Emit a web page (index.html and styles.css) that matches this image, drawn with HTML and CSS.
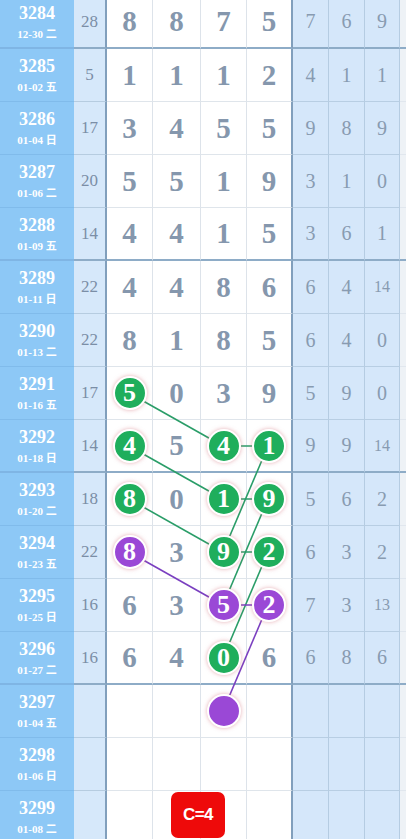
FILE: index.html
```html
<!DOCTYPE html>
<html lang="zh">
<head>
<meta charset="utf-8">
<title>走势图</title>
<link rel="stylesheet" href="styles.css">
</head>
<body>
<div class="board">
  <svg class="lines" width="406" height="839" viewBox="0 0 406 839">
    <g class="gl">
      <line x1="129" y1="393" x2="223" y2="446"/>
      <line x1="129" y1="446" x2="223" y2="499"/>
      <line x1="129" y1="499" x2="223" y2="552"/>
      <line x1="268" y1="446" x2="223" y2="552"/>
      <line x1="268" y1="499" x2="223" y2="605"/>
      <line x1="268" y1="552" x2="223" y2="658"/>
      <line x1="223" y1="446" x2="268" y2="446"/>
      <line x1="223" y1="499" x2="268" y2="499"/>
      <line x1="223" y1="552" x2="268" y2="552"/>
    </g>
    <g class="pl">
      <line x1="129" y1="552" x2="223" y2="605"/>
      <line x1="268" y1="605" x2="223" y2="711"/>
      <line x1="223" y1="605" x2="268" y2="605"/>
    </g>
  </svg>

  <div class="row g"><div class="id"><span class="no">3284</span><span class="dt">12-30 二</span></div><div class="sum">28</div><div class="m">8</div><div class="m">8</div><div class="m">7</div><div class="m">5</div><div class="r">7</div><div class="r">6</div><div class="r">9</div><div class="s"></div></div>
  <div class="row"><div class="id"><span class="no">3285</span><span class="dt">01-02 五</span></div><div class="sum">5</div><div class="m">1</div><div class="m">1</div><div class="m">1</div><div class="m">2</div><div class="r">4</div><div class="r">1</div><div class="r">1</div><div class="s"></div></div>
  <div class="row"><div class="id"><span class="no">3286</span><span class="dt">01-04 日</span></div><div class="sum">17</div><div class="m">3</div><div class="m">4</div><div class="m">5</div><div class="m">5</div><div class="r">9</div><div class="r">8</div><div class="r">9</div><div class="s"></div></div>
  <div class="row"><div class="id"><span class="no">3287</span><span class="dt">01-06 二</span></div><div class="sum">20</div><div class="m">5</div><div class="m">5</div><div class="m">1</div><div class="m">9</div><div class="r">3</div><div class="r">1</div><div class="r">0</div><div class="s"></div></div>
  <div class="row g"><div class="id"><span class="no">3288</span><span class="dt">01-09 五</span></div><div class="sum">14</div><div class="m">4</div><div class="m">4</div><div class="m">1</div><div class="m">5</div><div class="r">3</div><div class="r">6</div><div class="r">1</div><div class="s"></div></div>
  <div class="row"><div class="id"><span class="no">3289</span><span class="dt">01-11 日</span></div><div class="sum">22</div><div class="m">4</div><div class="m">4</div><div class="m">8</div><div class="m">6</div><div class="r">6</div><div class="r">4</div><div class="r two">14</div><div class="s"></div></div>
  <div class="row"><div class="id"><span class="no">3290</span><span class="dt">01-13 二</span></div><div class="sum">22</div><div class="m">8</div><div class="m">1</div><div class="m">8</div><div class="m">5</div><div class="r">6</div><div class="r">4</div><div class="r">0</div><div class="s"></div></div>
  <div class="row"><div class="id"><span class="no">3291</span><span class="dt">01-16 五</span></div><div class="sum">17</div><div class="m"><span class="ball green">5</span></div><div class="m">0</div><div class="m">3</div><div class="m">9</div><div class="r">5</div><div class="r">9</div><div class="r">0</div><div class="s"></div></div>
  <div class="row g"><div class="id"><span class="no">3292</span><span class="dt">01-18 日</span></div><div class="sum">14</div><div class="m"><span class="ball green">4</span></div><div class="m">5</div><div class="m"><span class="ball green">4</span></div><div class="m"><span class="ball green">1</span></div><div class="r">9</div><div class="r">9</div><div class="r two">14</div><div class="s"></div></div>
  <div class="row"><div class="id"><span class="no">3293</span><span class="dt">01-20 二</span></div><div class="sum">18</div><div class="m"><span class="ball green">8</span></div><div class="m">0</div><div class="m"><span class="ball green">1</span></div><div class="m"><span class="ball green">9</span></div><div class="r">5</div><div class="r">6</div><div class="r">2</div><div class="s"></div></div>
  <div class="row"><div class="id"><span class="no">3294</span><span class="dt">01-23 五</span></div><div class="sum">22</div><div class="m"><span class="ball purple">8</span></div><div class="m">3</div><div class="m"><span class="ball green">9</span></div><div class="m"><span class="ball green">2</span></div><div class="r">6</div><div class="r">3</div><div class="r">2</div><div class="s"></div></div>
  <div class="row"><div class="id"><span class="no">3295</span><span class="dt">01-25 日</span></div><div class="sum">16</div><div class="m">6</div><div class="m">3</div><div class="m"><span class="ball purple">5</span></div><div class="m"><span class="ball purple">2</span></div><div class="r">7</div><div class="r">3</div><div class="r two">13</div><div class="s"></div></div>
  <div class="row g"><div class="id"><span class="no">3296</span><span class="dt">01-27 二</span></div><div class="sum">16</div><div class="m">6</div><div class="m">4</div><div class="m"><span class="ball green">0</span></div><div class="m">6</div><div class="r">6</div><div class="r">8</div><div class="r">6</div><div class="s"></div></div>
  <div class="row"><div class="id"><span class="no">3297</span><span class="dt">01-04 五</span></div><div class="sum"></div><div class="m"></div><div class="m"></div><div class="m"><span class="ball purple empty"></span></div><div class="m"></div><div class="r"></div><div class="r"></div><div class="r"></div><div class="s"></div></div>
  <div class="row"><div class="id"><span class="no">3298</span><span class="dt">01-06 日</span></div><div class="sum"></div><div class="m"></div><div class="m"></div><div class="m"></div><div class="m"></div><div class="r"></div><div class="r"></div><div class="r"></div><div class="s"></div></div>
  <div class="row"><div class="id"><span class="no">3299</span><span class="dt">01-08 二</span></div><div class="sum"></div><div class="m"></div><div class="m"></div><div class="m"></div><div class="m"></div><div class="r"></div><div class="r"></div><div class="r"></div><div class="s"></div></div>

  <div class="badge">C=4</div>
</div>
</body>
</html>
```

FILE: styles.css
```css
html, body {
  margin: 0;
  padding: 0;
  background: #ffffff;
  overflow: hidden;
}

.board {
  position: relative;
  z-index: 0;
  width: 406px;
  height: 839px;
  overflow: hidden;
  font-family: "Liberation Serif", "Noto Sans CJK SC", serif;
}

.row {
  display: grid;
  grid-template-columns: 74px 33px 46px 48px 46px 46px 36px 36px 35px 1fr;
  height: 53px;
}

.row:first-of-type {
  margin-top: -4px;
}

.row > div {
  box-sizing: border-box;
  display: flex;
  align-items: center;
  justify-content: center;
  border-bottom: 1px solid #dfe5eb;
}

.id {
  background: #8dc8f6;
  flex-direction: column;
  justify-content: flex-start !important;
  padding-top: 7px;
  color: #ffffff;
  font-weight: bold;
  border-bottom-color: #80bbeb !important;
}

.no {
  font-size: 18px;
  line-height: 20px;
}

.dt {
  margin-top: 4px;
  font-size: 11px;
  line-height: 14px;
}

.sum {
  background: #d6e8fa;
  border-right: 2px solid #819fbc;
  border-bottom-color: #b6cce0 !important;
  color: #7b8ea6;
  font-size: 17px;
}

.m {
  background: #ffffff;
  border-right: 1px solid #dde3ea;
  color: #8597ad;
  font-size: 29px;
  font-weight: bold;
}

.m:nth-child(6) {
  border-right: 2px solid #819fbc;
}

.r {
  background: #d5e7fa;
  border-right: 1px solid #b5cce2;
  border-bottom-color: #b8cee3 !important;
  color: #889bb1;
  font-size: 20px;
}

.r.two {
  font-size: 16px;
}

.s {
  background: #eef2f6;
  border-bottom-color: #e1e7ee !important;
}

.row.g > div {
  border-bottom: 2px solid #8eacc7 !important;
}

.row.g > .id {
  border-bottom-color: #7fb5e4 !important;
}

.lines {
  position: absolute;
  left: 0;
  top: 0;
  z-index: 1;
  pointer-events: none;
}

.gl line {
  stroke: #2a9d68;
  stroke-width: 1.6;
}

.pl line {
  stroke: #7a3fc0;
  stroke-width: 1.6;
}

.ball {
  position: relative;
  z-index: 2;
  box-sizing: border-box;
  width: 34px;
  height: 34px;
  border-radius: 50%;
  border: 2px solid #ffffff;
  display: flex;
  align-items: center;
  justify-content: center;
  color: #ffffff;
  font-size: 26px;
  font-weight: bold;
  box-shadow: 0 0 4px rgba(210, 110, 120, 0.55);
}

.green {
  background: #1fae5c;
}

.purple {
  background: #9a48d6;
}

.badge {
  position: absolute;
  left: 171px;
  top: 792px;
  z-index: 3;
  width: 54px;
  height: 46px;
  border-radius: 7px;
  background: #ee0a0a;
  color: #ffffff;
  font-family: "Liberation Sans", Arial, sans-serif;
  font-weight: bold;
  font-size: 17px;
  display: flex;
  align-items: center;
  justify-content: center;
  letter-spacing: -0.5px;
}
```
